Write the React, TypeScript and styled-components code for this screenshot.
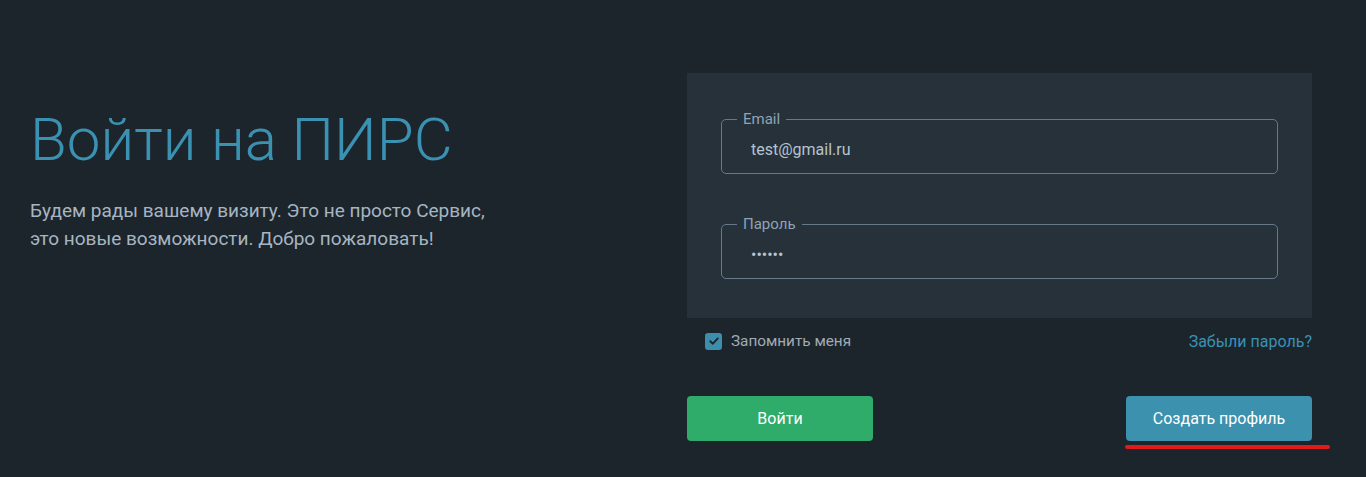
import { createGlobalStyle } from 'styled-components'
import styled from 'styled-components'

const GlobalStyle = createGlobalStyle`
  html, body {
    margin: 0;
    padding: 0;
    background: #1d252c;
  }
  body {
    font-family: Roboto, 'Noto Sans', sans-serif;
  }
  * {
    box-sizing: border-box;
  }
`

const App = () => {
  return (
    <>
      <GlobalStyle />
      <Page>
        <Intro>
          <Title>Войти на ПИРС</Title>
          <Lead>
            Будем рады вашему визиту. Это не просто Сервис,
            <br />
            это новые возможности. Добро пожаловать!
          </Lead>
        </Intro>
        <FormColumn>
          <FieldsPanel>
            <Field>
              <Legend>Email</Legend>
              <Input type="text" defaultValue="test@gmail.ru" />
            </Field>
            <Field>
              <Legend>Пароль</Legend>
              <Input type="password" defaultValue="123456" />
            </Field>
          </FieldsPanel>
          <OptionsRow>
            <Remember>
              <CheckBox>
                <svg width="12" height="12" viewBox="0 0 12 12">
                  <path
                    d="M2.3 6.2 L4.9 8.7 L9.8 3.4"
                    fill="none"
                    stroke="#1d252c"
                    strokeWidth="1.9"
                    strokeLinecap="round"
                    strokeLinejoin="round"
                  />
                </svg>
              </CheckBox>
              Запомнить меня
            </Remember>
            <ForgotLink href="#">Забыли пароль?</ForgotLink>
          </OptionsRow>
          <ButtonsRow>
            <ActionButton $variant="login">Войти</ActionButton>
            <Underlined>
              <ActionButton $variant="register">Создать профиль</ActionButton>
            </Underlined>
          </ButtonsRow>
        </FormColumn>
      </Page>
    </>
  )
}

export default App

const Page = styled.div`
  display: grid;
  grid-template-columns: 1fr 625px;
  padding: 73px 54px 0 30px;
  height: 477px;
  overflow: hidden;
`

const Intro = styled.div`
  display: flex;
  flex-direction: column;
  padding-top: 31px;
`

const Title = styled.h1`
  margin: 0;
  font-size: 60px;
  font-weight: 300;
  line-height: 72px;
  color: #3a91b1;
`

const Lead = styled.p`
  margin: 21px 0 0;
  font-size: 19px;
  line-height: 28px;
  color: #a7b5c1;
`

const FormColumn = styled.div`
  display: flex;
  flex-direction: column;
`

const FieldsPanel = styled.div`
  display: flex;
  flex-direction: column;
  gap: 41px;
  background: #27313a;
  height: 245px;
  padding: 37px 34px 0;
`

const Field = styled.fieldset`
  margin: 0;
  height: 64px;
  padding: 0 22px 0 29px;
  border: 1px solid #66788a;
  border-radius: 5px;
  min-width: 0;
`

const Legend = styled.legend`
  margin-left: -14px;
  padding: 0 6px;
  font-size: 15px;
  line-height: 18px;
  color: #8ea4b5;
`

const Input = styled.input`
  width: 100%;
  height: 42px;
  padding: 0;
  border: none;
  outline: none;
  background: transparent;
  font-family: Roboto, 'Noto Sans', sans-serif;
  font-size: 16px;
  color: #b4c4d0;
`

const OptionsRow = styled.div`
  display: flex;
  align-items: center;
  justify-content: space-between;
  height: 46px;
  padding-left: 18px;
`

const Remember = styled.label`
  display: flex;
  align-items: center;
  gap: 9px;
  font-size: 15.3px;
  color: #a1abb5;
`

const CheckBox = styled.span`
  display: inline-flex;
  align-items: center;
  justify-content: center;
  width: 17px;
  height: 17px;
  border-radius: 3px;
  background: #3b8fad;
`

const ForgotLink = styled.a`
  font-size: 16px;
  color: #3a91b5;
  text-decoration: none;
`

const ButtonsRow = styled.div`
  display: flex;
  justify-content: space-between;
  margin-top: 32px;
`

const ActionButton = styled.button<{ $variant: 'login' | 'register' }>`
  width: 186px;
  height: 45px;
  border: none;
  border-radius: 4px;
  background: ${(p) => (p.$variant === 'login' ? '#2fac6a' : '#3c91ae')};
  color: #fff;
  font-family: Roboto, 'Noto Sans', sans-serif;
  font-size: 16px;
  font-weight: 400;
  cursor: pointer;
`

const Underlined = styled.div`
  position: relative;

  &::after {
    content: '';
    position: absolute;
    left: -1px;
    top: 49px;
    width: 205px;
    height: 4px;
    border-radius: 2px;
    background: #e11b1b;
  }
`
